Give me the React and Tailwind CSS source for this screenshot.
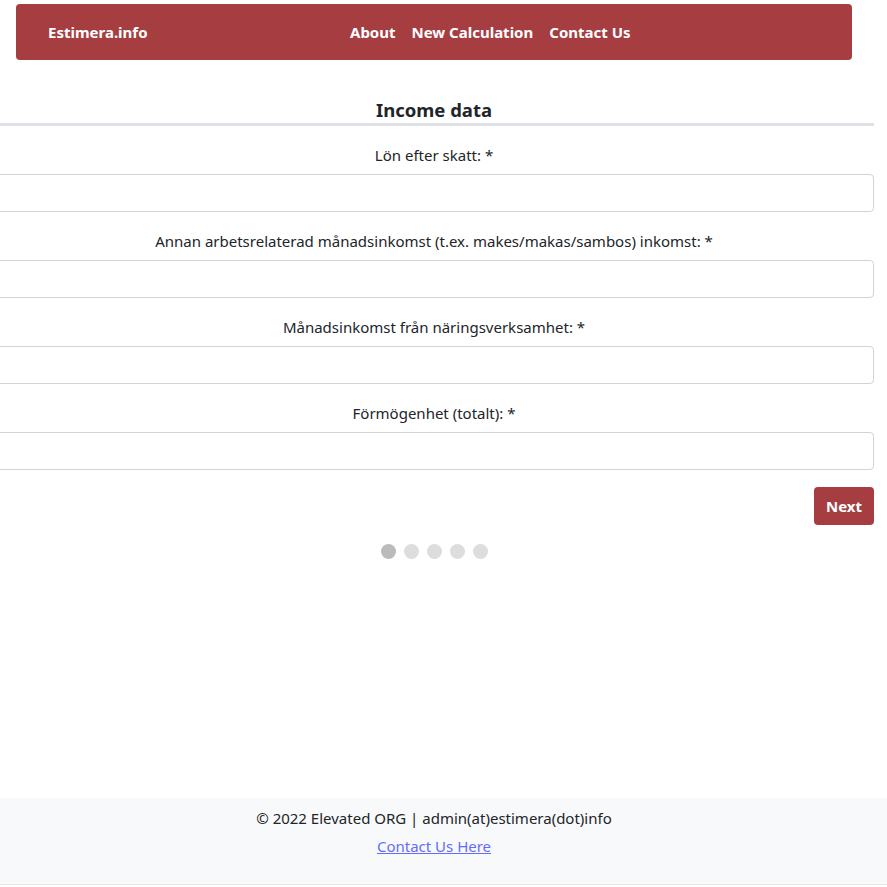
import React from 'react';

const fields = [
  'Lön efter skatt: *',
  'Annan arbetsrelaterad månadsinkomst (t.ex. makes/makas/sambos) inkomst: *',
  'Månadsinkomst från näringsverksamhet: *',
  'Förmögenhet (totalt): *',
];

export default function App() {
  return (
    <div className="flex min-h-[887px] flex-col overflow-hidden bg-white text-[15px] text-[#212529] [font-family:'Noto_Sans',sans-serif]">
      <div className="pl-4 pr-[35px] pt-1">
        <nav className="flex h-14 items-center rounded bg-[#a63d40] px-8 text-[15px] font-bold text-white">
          <span className="w-[302px]">Estimera.info</span>
          <div className="flex gap-4">
            <span>About</span>
            <span>New Calculation</span>
            <span>Contact Us</span>
          </div>
        </nav>
      </div>

      <main className="ml-[-6px] w-[880px] pt-[37px]">
        <h2 className="border-b-[3px] border-[#dee2e6] text-center text-[18.5px] font-bold leading-[26px]">Income data</h2>
        <form className="mt-[17px] flex flex-col gap-[17px]">
          {fields.map((f) => (
            <div key={f} className="flex flex-col gap-[7px]">
              <label className="text-center leading-6">{f}</label>
              <input className="h-[38px] rounded border border-[#ced4da] bg-white px-3" />
            </div>
          ))}
          <div className="flex justify-end">
            <button type="button" className="h-[38px] rounded bg-[#a63d40] px-3 font-bold text-white">Next</button>
          </div>
        </form>
        <div className="mt-[19px] flex justify-center gap-2">
          <span className="h-[15px] w-[15px] rounded-full bg-[#bbbbbb]" />
          <span className="h-[15px] w-[15px] rounded-full bg-[#dddddd]" />
          <span className="h-[15px] w-[15px] rounded-full bg-[#dddddd]" />
          <span className="h-[15px] w-[15px] rounded-full bg-[#dddddd]" />
          <span className="h-[15px] w-[15px] rounded-full bg-[#dddddd]" />
        </div>
      </main>

      <footer className="mt-auto mb-[2px] flex h-[87px] flex-col items-center border-b border-[#e5e7eb] bg-[#f8f9fa] pr-[19px] pt-2">
        <p className="leading-6">© 2022 Elevated ORG | admin(at)estimera(dot)info</p>
        <a href="#" className="mt-1 leading-6 text-[#646cff] underline">Contact Us Here</a>
      </footer>
    </div>
  );
}
